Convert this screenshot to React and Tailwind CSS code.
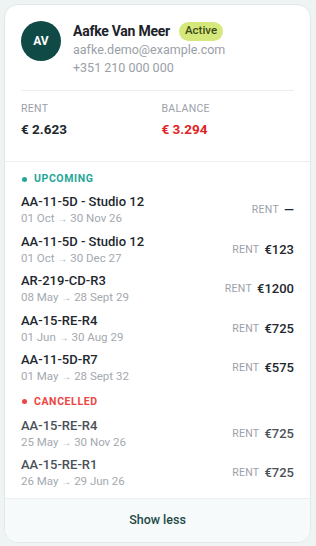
import React from "react";

const upcoming = [
  { t: "AA-11-5D - Studio 12", a: "01 Oct", b: "30 Nov 26", v: "—" },
  { t: "AA-11-5D - Studio 12", a: "01 Oct", b: "30 Dec 27", v: "€123" },
  { t: "AR-219-CD-R3", a: "08 May", b: "28 Sept 29", v: "€1200" },
  { t: "AA-15-RE-R4", a: "01 Jun", b: "30 Aug 29", v: "€725" },
  { t: "AA-11-5D-R7", a: "01 May", b: "28 Sept 32", v: "€575" },
];
const cancelled = [
  { t: "AA-15-RE-R4", a: "25 May", b: "30 Nov 26", v: "€725" },
  { t: "AA-15-RE-R1", a: "26 May", b: "29 Jun 26", v: "€725" },
];

function Row({ r, muted }) {
  return (
    <div className="flex items-center justify-between h-[39.5px]">
      <div className="flex flex-col">
        <div className={`text-[13px] font-medium leading-[17px] ${muted ? "text-[#4b5157]" : "text-[#22272e]"}`}>{r.t}</div>
        <div className="text-[11.5px] leading-[16px] text-[#a3a9b0]">
          {r.a} <span className="text-[10px]">→</span> {r.b}
        </div>
      </div>
      <div className="flex items-center gap-[5px]">
        <span className="text-[10.5px] text-[#9ba1a9] tracking-[0.3px]">RENT</span>
        <span className={`text-[13px] font-medium ${muted ? "text-[#4b5157]" : "text-[#22272e]"}`}>{r.v}</span>
      </div>
    </div>
  );
}

export default function App() {
  return (
    <div className="min-h-[546px] bg-[#eef3f3] p-[4px] pr-[5px]" style={{ fontFamily: "Roboto, 'Noto Sans', sans-serif" }}>
      <div className="bg-white border border-[#e2e8e8] rounded-[14px] overflow-hidden">
        <div className="px-[16px] pt-[16px] pb-[22px]">
          <div className="flex gap-[12px]">
            <div className="w-[40px] h-[40px] rounded-full bg-[#0f4a47] flex items-center justify-center text-white text-[12px] font-bold">AV</div>
            <div className="flex flex-col">
              <div className="flex items-center gap-[9px] h-[20px]">
                <span className="text-[14px] font-bold text-[#1d222a] tracking-[-0.25px]">Aafke Van Meer</span>
                <span className="bg-[#d5e87c] text-[#3c4a17] text-[11.5px] font-medium px-[6px] h-[19px] flex items-center rounded-full">Active</span>
              </div>
              <div className="text-[12.5px] text-[#9aa0a8] leading-[18px]">aafke.demo@example.com</div>
              <div className="text-[12.5px] text-[#9aa0a8] leading-[18px]">+351 210 000 000</div>
            </div>
          </div>
          <div className="h-px bg-[#eceff1] mt-[13px]" />
          <div className="grid grid-cols-2 mt-[11px]">
            <div>
              <div className="text-[10.5px] text-[#9ba1a9] tracking-[0.3px] leading-[14px]">RENT</div>
              <div className="text-[13.5px] font-bold text-[#22272e] mt-[3px]">€ 2.623</div>
            </div>
            <div className="pl-[4px]">
              <div className="text-[10.5px] text-[#9ba1a9] tracking-[0.3px] leading-[14px]">BALANCE</div>
              <div className="text-[13.5px] font-bold text-[#e02424] mt-[3px]">€ 3.294</div>
            </div>
          </div>
        </div>
        <div className="border-t border-[#eceff1] px-[16px] pt-[10px] pb-[5px]">
          <div className="flex items-center gap-[7px] h-[14px] mb-[4px]">
            <span className="w-[5px] h-[5px] rounded-full bg-[#26a69a] ml-[1px]" />
            <span className="text-[10.5px] font-bold tracking-[0.6px] text-[#26a69a]">UPCOMING</span>
          </div>
          {upcoming.map((r, i) => <Row key={i} r={r} />)}
          <div className="flex items-center gap-[7px] h-[14px] mt-[7px] mb-[5px]">
            <span className="w-[5px] h-[5px] rounded-full bg-[#ef4444] ml-[1px]" />
            <span className="text-[10.5px] font-bold tracking-[0.6px] text-[#ef4444]">CANCELLED</span>
          </div>
          {cancelled.map((r, i) => <Row key={i} r={r} muted />)}
        </div>
        <div className="border-t border-[#eceff1] bg-[#f7fafa] h-[44px] flex items-center justify-center">
          <span className="text-[12.5px] font-medium text-[#1e4a48]">Show less</span>
        </div>
      </div>
    </div>
  );
}
